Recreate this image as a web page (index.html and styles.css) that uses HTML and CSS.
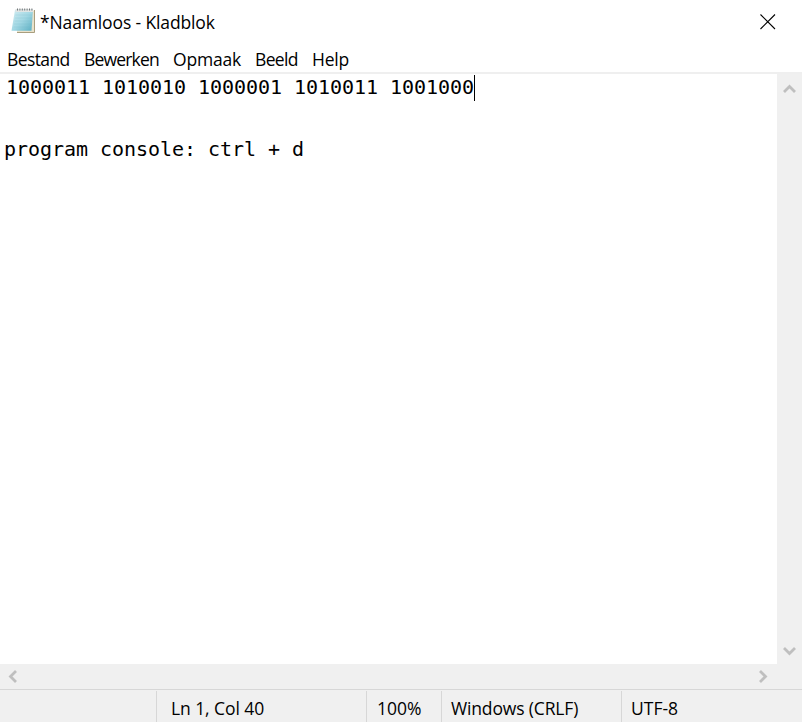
FILE: index.html
```html
<!DOCTYPE html>
<html lang="nl">
<head>
<meta charset="utf-8">
<title>*Naamloos - Kladblok</title>
<link rel="stylesheet" href="styles.css">
</head>
<body>
<div class="window">
  <header class="titlebar">
    <svg class="app-icon" width="25" height="26" viewBox="0 0 25 26">
      <defs><linearGradient id="page" x1="0" y1="0" x2="1" y2="1"><stop offset="0" stop-color="#d3edf2"/><stop offset=".5" stop-color="#a3d8e4"/><stop offset="1" stop-color="#5aaec2"/></linearGradient></defs>
      <path d="M6 2.5H23.5V24.5H6Z" fill="#e9e2cb"/>
      <path d="M23.5 2V24.5H6" fill="none" stroke="#a99e7e"/>
      <path d="M4 2H22L20.5 22.8H.5Z" fill="url(#page)"/>
      <path d="M4.5 7H21M4.2 10H20.8M3.7 13H20.5M3.2 16H20.3M2.8 19H20" stroke="#70b5c6" stroke-width=".5" opacity=".4"/>
      <path d="M4.5 2.5H22" stroke="#e0e5e5" stroke-width="3"/>
      <path d="M6 1.5H22" stroke="#727779" stroke-width="2" stroke-dasharray="1 1.4"/>
    </svg>
    <h1 class="title">*Naamloos - Kladblok</h1>
    <svg class="close" width="16" height="16" viewBox="0 0 16 16"><path d="M.5.5 15 15M15 .5.5 15" fill="none" stroke="#000" stroke-width="1.1"/></svg>
  </header>
  <nav class="menu"><span class="bestand">Bestand</span><span class="bewerken">Bewerken</span><span class="opmaak">Opmaak</span><span class="beeld">Beeld</span><span class="help">Help</span></nav>
  <main class="workspace">
    <div class="editor"><p class="binary">1000011 1010010 1000001 1010011 1001000<i class="caret"></i></p><p>&nbsp;</p><p>program console: ctrl + d</p></div>
    <div class="vscroll"><svg width="13" height="10" viewBox="0 0 13 10"><path d="M1 8 6.5 2.5 12 8"/></svg><svg width="13" height="10" viewBox="0 0 13 10"><path d="M1 2 6.5 7.5 12 2"/></svg></div>
  </main>
  <div class="hscroll"><svg width="10" height="13" viewBox="0 0 10 13"><path d="M8 1 2.5 6.5 8 12"/></svg><svg width="10" height="13" viewBox="0 0 10 13"><path d="M2 1 7.5 6.5 2 12"/></svg></div>
  <footer class="status"><span></span><span class="position">Ln 1, Col 40</span><span class="zoom-level">100%</span><span class="line-ending">Windows (CRLF)</span><span>UTF-8</span></footer>
</div>
</body>
</html>
```
FILE: styles.css
```css
* { box-sizing: border-box; }
body { margin: 0; background: #fff; color: #000; font: 17.5px/24px "Open Sans", sans-serif; }
.window { display: flex; flex-direction: column; width: 802px; height: 722px; overflow: hidden; }
.titlebar { display: flex; align-items: center; height: 44px; padding: 0 26px 0 11px; }
.app-icon { margin: -2px 4px 0 0; }
.title { margin: 0; font: inherit; letter-spacing: -.13px; white-space: pre; }
.close { margin-left: auto; }
.menu { display: flex; height: 28px; padding: 3px 7px; white-space: nowrap; }
.bestand { width: 77px; letter-spacing: -.6px; }
.bewerken { width: 89px; letter-spacing: -.82px; }
.opmaak { width: 82px; letter-spacing: -.2px; }
.beeld { width: 57px; letter-spacing: -.65px; }
.help { letter-spacing: -.2px; }
.workspace { display: flex; height: 592px; border-top: 2px solid #efefef; }
.editor { flex: 1; padding-left: 4px; font: 20px/31px "DejaVu Sans Mono", monospace; letter-spacing: -.041px; white-space: pre; }
.editor p { height: 31px; margin: 0; }
.editor p:first-child { margin-top: -2px; }
.binary { padding-left: 2px; }
.caret { display: inline-block; width: 1px; height: 26px; margin-top: -2px; background: #000; vertical-align: middle; }
.vscroll { display: flex; flex-direction: column; justify-content: space-between; align-items: center; width: 25px; padding: 10px 0 8px; background: #f0f0f0; }
.hscroll { display: flex; justify-content: space-between; align-items: center; height: 25px; padding: 0 34px 0 8px; background: #f0f0f0; }
.vscroll path, .hscroll path { fill: none; stroke: #bfbfbf; stroke-width: 2.8; }
.status { display: grid; grid-template-columns: 156px 210px 75px 180px 1fr; flex: 1; padding-top: 1px; background: #f0f0f0; border-top: 1px solid #d7d7d7; }
.status span { padding: 5px 0 0 9px; border-left: 1px solid #d7d7d7; }
.status span:first-child { border: 0; }
.status .position { padding-left: 14px; letter-spacing: -.08px; }
.status .zoom-level { padding-left: 10px; }
.line-ending { letter-spacing: -.15px; }
```
